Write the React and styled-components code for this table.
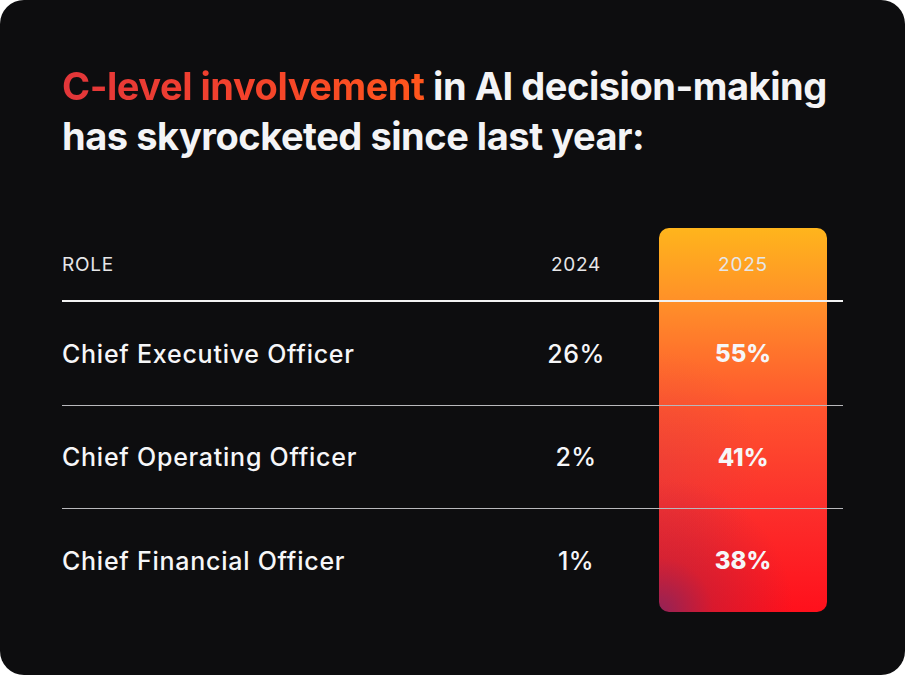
import React from 'react';
import styled, { createGlobalStyle } from 'styled-components';

const GlobalStyle = createGlobalStyle`
  html, body {
    margin: 0;
    padding: 0;
    background: #ffffff;
  }
  body {
    font-family: Inter, 'Noto Sans', sans-serif;
  }
`;

const Card = styled.div`
  box-sizing: border-box;
  width: 905px;
  height: 675px;
  background: #0d0d0f;
  border-radius: 24px;
  padding: 61px 62px 0 62px;
  color: #ffffff;
`;

const Title = styled.h1`
  margin: 0;
  font-size: 38px;
  line-height: 50px;
  font-weight: 700;
  letter-spacing: -0.012em;
  color: #f4f4f6;
`;

const Accent = styled.span`
  background: linear-gradient(90deg, #e2363a 0%, #f4422c 50%, #ff561c 100%);
  -webkit-background-clip: text;
  background-clip: text;
  color: transparent;
`;

const Table = styled.div`
  margin-top: 67px;
  display: grid;
  grid-template-columns: 1fr 120px 23px 168px 16px;
  grid-template-rows: 72px 2px 103px 1px 102px 1px 103px;
`;

const Highlight = styled.div`
  grid-column: 4;
  grid-row: 1 / -1;
  border-radius: 10px;
  background:
    radial-gradient(circle at 0% 100%, rgba(140, 36, 90, 0.95) 0%, rgba(160, 36, 70, 0.4) 13%, rgba(180, 40, 60, 0) 32%),
    radial-gradient(ellipse 60% 30% at 0% 62%, rgba(190, 60, 80, 0.22) 0%, rgba(190, 60, 80, 0) 100%),
    linear-gradient(180deg, #ffb51c 0%, #ff8a2a 22%, #ff522e 48%, #fc302c 72%, #ff101c 100%);
`;

const Line = styled.div`
  grid-column: 1 / -1;
  grid-row: ${p => p.$row};
  background: ${p => (p.$strong ? '#f2f2f2' : '#b8b8bc')};
  position: relative;
  z-index: 1;
`;

const Cell = styled.div`
  grid-row: ${p => p.$row};
  grid-column: ${p => p.$col};
  display: flex;
  align-items: center;
  justify-content: ${p => (p.$col === 1 ? 'flex-start' : 'center')};
  position: relative;
  z-index: 1;
`;

const Head = styled.span`
  font-size: 19px;
  font-weight: 400;
  color: #e6e6e8;
  letter-spacing: 0.04em;
`;

const Role = styled.span`
  font-size: 25px;
  font-weight: 500;
  color: #f6f6f8;
  letter-spacing: 0.03em;
`;

const Value = styled.span`
  font-size: ${p => (p.$bold ? '24px' : '25px')};
  font-weight: ${p => (p.$bold ? 800 : 500)};
  color: #f6f6f8;
  letter-spacing: ${p => (p.$bold ? '0' : '0.02em')};
`;

const rows = [
  { role: 'Chief Executive Officer', prev: '26%', next: '55%' },
  { role: 'Chief Operating Officer', prev: '2%', next: '41%' },
  { role: 'Chief Financial Officer', prev: '1%', next: '38%' },
];

const App = () => {
  return (
    <>
      <GlobalStyle />
      <Card>
        <Title>
          <Accent>C-level involvement</Accent> in AI decision-making
          <br />
          has skyrocketed since last year:
        </Title>
        <Table>
          <Highlight />
          <Cell $row={1} $col={1}>
            <Head>ROLE</Head>
          </Cell>
          <Cell $row={1} $col={2}>
            <Head>2024</Head>
          </Cell>
          <Cell $row={1} $col={4}>
            <Head>2025</Head>
          </Cell>
          <Line $row={2} $strong />
          {rows.map((r, i) => (
            <React.Fragment key={r.role}>
              <Cell $row={3 + i * 2} $col={1}>
                <Role>{r.role}</Role>
              </Cell>
              <Cell $row={3 + i * 2} $col={2}>
                <Value>{r.prev}</Value>
              </Cell>
              <Cell $row={3 + i * 2} $col={4}>
                <Value $bold>{r.next}</Value>
              </Cell>
              {i < rows.length - 1 && <Line $row={4 + i * 2} />}
            </React.Fragment>
          ))}
        </Table>
      </Card>
    </>
  );
};

export default App;
